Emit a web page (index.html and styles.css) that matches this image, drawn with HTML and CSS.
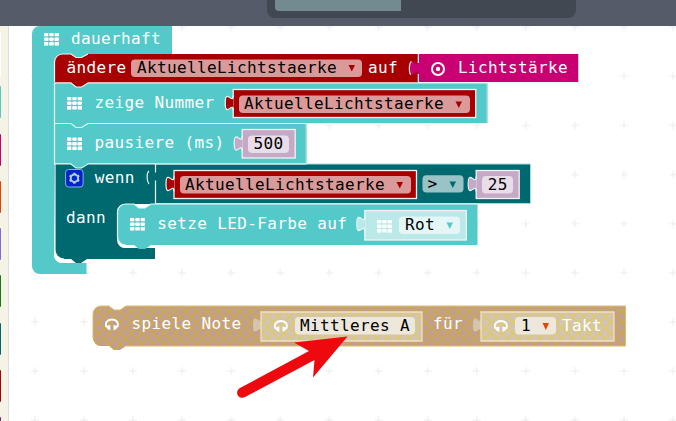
FILE: index.html
```html
<!DOCTYPE html>
<html lang="de">
<head>
<meta charset="utf-8">
<title>Editor</title>
<link rel="stylesheet" href="styles.css">
</head>
<body>
<header class="topbar"><div class="switch"><div class="switch-active"></div></div></header>
<main class="editor">
<aside class="toolbox"><i class="search"></i><i class="basic"></i><i class="input"></i><i class="music"></i><i class="led"></i><i class="loops"></i><i class="logic"></i><i class="vars"></i><i class="math"></i></aside>
<svg class="workspace" viewBox="9 26 667 395" width="667" height="395">
<defs>
<pattern id="grid" x="10.3" y="2.7" width="49.1" height="49.1" patternUnits="userSpaceOnUse"><path class="plus" d="M20.5 24.5h8M24.5 20.5v8"/></pattern>
<pattern id="hatch" x="93" y="306" width="10.9" height="10.9" patternUnits="userSpaceOnUse"><path class="hatch-line" d="M-1-1L12 12M12-1.100L-1 11.900"/></pattern>
<pattern id="hatch-light" x="93" y="306" width="10.9" height="10.9" patternUnits="userSpaceOnUse"><path class="hatch-line light" d="M-1-1L12 12M12-1.100L-1 11.900"/></pattern>
<g id="leds" class="icon"><rect width="4.3" height="3.3"/><rect x="5.2" width="4.6" height="3.3" rx="1.2"/><rect x="10.7" width="4.3" height="3.3"/><rect y="4.4" width="4.6" height="3.5" rx="1.2"/><rect x="5.2" y="4.4" width="4.6" height="3.5" rx="1.2"/><rect x="10.4" y="4.4" width="4.6" height="3.5" rx="1.2"/><rect y="9" width="4.3" height="3.6"/><rect x="5.2" y="9" width="4.6" height="3.6" rx="1.2"/><rect x="10.7" y="9" width="4.3" height="3.6"/></g>
<g id="phones"><path class="band" d="M1.300 9.500C-.3 4.500 3 2 6.900 2s7.200 2.500 5.600 7.500"/><path class="icon" d="M.8 8.500L5.300 7.600V12.800C3 12.300 1.300 10.500.8 8.500zM13 8.500L8.500 7.600V12.800C10.800 12.300 12.500 10.500 13 8.500z"/></g>
<path id="tab" d="M0 20c0-10-8 8-8-7.500s8 2.500 8-7.500z"/>
<path id="tabline" class="edge" d="M0 20c0-10-8 8-8-7.500s8 2.500 8-7.500"/>
</defs>
<rect class="paper" x="9" y="26" width="667" height="395"/>
<rect x="9" y="26" width="667" height="395" fill="url(#grid)"/>

<g class="stack">
<path class="c-basic" d="M32 34a8 8 0 0 1 8-8H172V54H88L81.500 57.500H76L71 54H62a8 8 0 0 0-8 8V255a8 8 0 0 0 8 8H86.500V274H40a8 8 0 0 1-8-8z"/>
<path class="paper" d="M54 245V255a8 8 0 0 0 8 8H87V255z"/>
<use href="#leds" x="44" y="33"/><text x="71" y="44">dauerhaft</text>

<path class="c-logic" d="M54 164H530.500V203.500H155V204H125a8 8 0 0 0-8 8V240a8 8 0 0 0 8 8H155V259H87L81 263H76L71 259H64a9 9 0 0 1-9-9z"/>
<path class="soft" d="M155 164H530.500V203.500H155"/>
<path class="edge" d="M155.500 204V180.500M155.500 172.500V164M149 171C146.500 173 146.500 181 149 184"/>
<path class="edge" d="M55 164V250a9 9 0 0 0 9 9"/>
<path class="c-basic" d="M54 124H306.500V163.500H88L81.500 168H76L71 163.500H54z"/>
<path class="edge" d="M54 164H71L76 168H81.500L88 164H306.500"/>
<path class="c-basic" d="M54 83H487.500V123H88L81.500 127.500H76L71 123H54z"/>
<path class="edge" d="M54.500 83V164M54 123.500H71L76 127.500H81.500L88 123.500H487"/>
<path class="soft" d="M306 124V163M487 83V123"/>
<path class="c-vars" d="M54 62a8 8 0 0 1 8-8H71L76 57.500H81.500L88 54H418V82.500H88L81.500 87H76L71 82.500H54z"/>
<path class="edge" d="M54.500 82V62a8 8 0 0 1 8-8H71L76 57.500H81.500L88 54M54 83H71L76 87H81.500L88 83H578"/>
<text x="66.500" y="73">ändere</text><rect class="field pink" x="131" y="59.500" width="231" height="17.500" rx="4"/><text class="dark" x="137" y="73">AktuelleLichtstaerke</text><path class="arrow red" d="M348.500 65h6.500l-3.200 6.500z"/>
<text x="368" y="73">auf</text>
<rect class="c-input" x="418" y="54" width="160.500" height="28"/><use class="c-input" href="#tab" x="418" y="55.500"/><path class="edge" d="M418.300 54V63M418.300 74V82M411.500 61.500c-3 2-2.500 12-.5 13"/>
<circle class="ring" cx="438" cy="69" r="6"/><circle class="icon" cx="438" cy="69" r="2.200"/><text x="458" y="73">Lichtstärke</text>
<path class="soft" d="M578.500 54V83"/>

<use href="#leds" x="67" y="97"/><text x="94.500" y="108">zeige Nummer</text>
<rect class="c-vars line" x="233.200" y="89.500" width="242.500" height="28"/><use class="c-vars" href="#tab" x="233.600" y="90.500"/><use href="#tabline" x="233.200" y="90.500"/><rect class="field pink" x="239" y="95.500" width="231" height="17.500" rx="4"/><text class="dark" x="244" y="109">AktuelleLichtstaerke</text><path class="arrow red" d="M455.500 101.500h6.500l-3.200 6.500z"/>

<use href="#leds" x="67" y="137.500"/><text x="94.500" y="148">pausiere (ms)</text>
<rect class="c-number line" x="242.200" y="129.500" width="53" height="28.500"/><use class="c-number" href="#tab" x="242.600" y="131"/><use href="#tabline" x="242.200" y="131"/><rect class="field pale" x="248" y="135.500" width="41" height="17.500" rx="4"/><text class="dark" x="253.500" y="149">500</text>

<rect class="gear-box" x="65.600" y="169.500" width="17.500" height="17.500" rx="3"/><circle class="gear" cx="74.400" cy="178.300" r="3.700"/><path class="teeth" d="M74.400 172.800v2M74.400 181.800v2M69.640 175.550l1.700 1M77.460 180.050l1.700 1M69.640 181.050l1.700-1M77.460 176.550l1.700-1"/>
<text x="94.700" y="183">wenn</text><text x="66" y="223">dann</text>
<rect class="c-vars line" x="174" y="170.500" width="242.500" height="28"/><use class="c-vars" href="#tab" x="174.400" y="171.500"/><use href="#tabline" x="174" y="171.500"/><rect class="field pink" x="180" y="176" width="231" height="17.500" rx="4"/><text class="dark" x="185" y="190">AktuelleLichtstaerke</text><path class="arrow red" d="M396.500 182h6.500l-3.200 6.500z"/>
<rect class="field grey" x="422.500" y="175.200" width="41" height="17.300" rx="4"/><text class="dark" x="427.500" y="189">&gt;</text><path class="arrow deep" d="M449.500 181.500h6.500l-3.200 6.500z"/>
<rect class="c-number line" x="476.200" y="170.500" width="43" height="28"/><use class="c-number" href="#tab" x="476.600" y="171.500"/><use href="#tabline" x="476.200" y="171.500"/><rect class="field pale" x="482" y="176" width="31" height="17.500" rx="4"/><text class="dark" x="487.700" y="190">25</text>

<path class="paper" d="M118 238a8 8 0 0 0 8 10H155V243H118z"/>
<path class="c-basic" d="M117.500 212a8 8 0 0 1 8-8H134L139 208H145L151 204H477.500V245H151L145 249H139L134 245H125.500a8 8 0 0 1-8-8z"/>
<path class="edge" d="M117.500 237V212a8 8 0 0 1 8-8H134L139 208H145L151 204H477M117.500 237a8 8 0 0 0 8 8"/>
<use href="#leds" x="130" y="218"/><text x="157.300" y="229">setze LED-Farbe auf</text>
<rect class="c-color line" x="364.800" y="210.500" width="101.500" height="29.500"/><use class="c-color" href="#tab" x="365.200" y="211.500"/><use href="#tabline" x="364.800" y="211.500"/><use href="#leds" x="377" y="220"/><rect class="field ice" x="399" y="216.500" width="61" height="17.500" rx="4"/><text class="dark" x="405" y="230">Rot</text><path class="arrow teal" d="M446.500 222.500h6.500l-3.200 6.500z"/>
</g>

<g class="disabled">
<path class="c-off" d="M93 314a8 8 0 0 1 8-8H109L114 310H120L126 306H625.500V346H126L120 350H114L109 346H101a8 8 0 0 1-8-8z"/>
<path fill="url(#hatch)" d="M93 314a8 8 0 0 1 8-8H109L114 310H120L126 306H625.500V346H126L120 350H114L109 346H101a8 8 0 0 1-8-8z"/>
<path class="off-edge" d="M93 338V314a8 8 0 0 1 8-8H109L114 310H120L126 306H625.500V346H126"/>
<g class="off-inner"><rect x="261" y="312" width="161" height="29"/><rect x="481" y="312" width="133" height="29"/><use href="#tab" x="261" y="312.500"/><use href="#tab" x="481" y="312.500"/></g>
<path fill="url(#hatch-light)" d="M261 312H422V341H261zM481 312H614V341H481z"/>
<path class="off-line" d="M261 312H422V341H261zM481 312H614V341H481z"/>
<use href="#phones" x="105" y="317.500"/><text x="131.500" y="329">spiele Note</text>
<use href="#phones" x="274" y="319"/><rect class="field cream" x="295" y="317" width="120" height="17.500" rx="4"/><text class="dark" x="300" y="331">Mittleres A</text>
<text x="433" y="329">für</text>
<use href="#phones" x="494" y="319"/><rect class="field cream" x="515" y="317" width="41" height="17.500" rx="4"/><text class="dark" x="521" y="331">1</text><path class="arrow orange" d="M542.500 323h6.500l-3.200 7z"/><text x="562" y="331">Takt</text>
</g>
<path class="pointer" d="M347.500 336.500L294 342.500L309 351L239.500 388.300A5 5 0 0 0 245 397L314.500 360L313 377.500z"/>
</svg>
</main>
</body>
</html>
```

FILE: styles.css
```css
body { margin: 0; width: 676px; height: 421px; overflow: hidden; background: #fff; }
.topbar { height: 26px; background: #545b69; display: flex; padding-left: 267px; box-sizing: border-box; }
.switch { width: 309px; height: 18px; box-sizing: border-box; padding-left: 8px; background: #424851; border-radius: 0 0 8px 8px; }
.switch-active { width: 126px; height: 11px; background: #738a91; border-radius: 0 0 0 4px; }
.editor { display: flex; height: 395px; }
.toolbox { width: 9px; height: 395px; box-sizing: border-box; border-right: 1px solid #ddd; background: #f5f2e6; display: flex; flex-direction: column; gap: 15.3px; padding-top: 6px; overflow: hidden; }
.toolbox i { flex: none; width: 1px; height: 32px; border-radius: 0 1px 1px 0; }
.toolbox .search { height: 45px; margin-bottom: -6px; background: #fff; }
.basic { background: #54c9c9; }
.input { background: #c90072; }
.music { background: #e64500; }
.led { background: #8169e6; }
.loops { background: #107c10; }
.logic { background: #006970; }
.vars { background: #a80000; }
.math { background: #712672; }
.workspace { display: block; flex: none; }
text { font: 16px "DejaVu Sans Mono", monospace; letter-spacing: .37px; fill: #fff; white-space: pre; }
.dark { fill: #000; }
.paper { fill: #fff; }
.plus { stroke: #ebebeb; fill: none; }
.icon { fill: #fff; }
.c-basic { fill: #54c9c9; }
.c-logic { fill: #006970; }
.c-vars { fill: #a80000; }
.c-input { fill: #c90072; }
.c-number { fill: #c5a9c6; }
.c-color { fill: #bbe9e9; }
.line { stroke: #f3f3f3; stroke-width: 1.3; }
.edge { stroke: #e9f7f7; stroke-width: 1.2; fill: none; }
.soft { stroke: #a5dcdc; stroke-width: 1; fill: none; }
.pink { fill: #dc9999; }
.pale { fill: #e8dde8; }
.grey { fill: #99c3c6; }
.ice { fill: #e4f6f6; }
.cream { fill: #eee8dc; }
.red { fill: #a80000; }
.deep { fill: #006970; }
.teal { fill: #54c9c9; }
.orange { fill: #e64500; }
.ring { fill: none; stroke: #fff; stroke-width: 2; }
.band { fill: none; stroke: #fff; stroke-width: 1.8; }
.gear-box { fill: #0024d0; stroke: #8daee0; stroke-width: 1; }
.gear { fill: none; stroke: #b4cde0; stroke-width: 2; }
.teeth { fill: none; stroke: #b4cde0; stroke-width: 2.2; }
.c-off { fill: #c29d93; }
.hatch-line { stroke: #cbab42; stroke-width: 1.5; fill: none; }
.hatch-line.light { stroke: #dccb62; stroke-width: 1.3; }
.off-edge { fill: none; stroke: #d8bd70; stroke-width: 1; }
.off-inner { fill: #dfdccf; fill-opacity: .6; }
.off-line { fill: none; stroke: #f1dfc6; stroke-width: 1.3; }
.pointer { fill: #ee090e; }
```
